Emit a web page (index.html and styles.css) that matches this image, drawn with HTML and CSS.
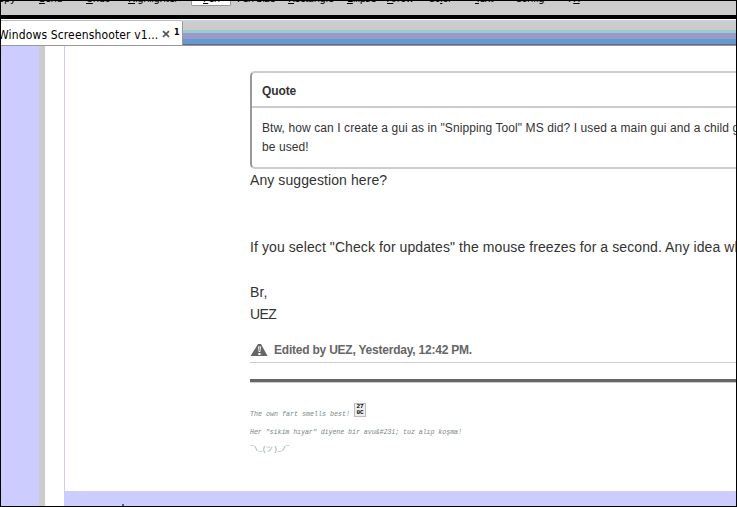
FILE: index.html
```html
<!DOCTYPE html>
<html lang="en">
<head>
<meta charset="utf-8">
<title>Windows Screenshooter</title>
<link rel="stylesheet" href="styles.css">
</head>
<body>
<div class="window">
  <div class="toolbar">
    <span>Copy</span><span><u>S</u>end</span><span><u>U</u>ndo</span><span><u>H</u>ighlighter</span><span class="active"><u>P</u>en</span><span>Pen Size</span><span><u>R</u>ectangle</span><span><u>E</u>llipse</span><span><u>A</u>rrow</span><span>Co<u>l</u>or</span><span><u>T</u>ext</span><span>Confi<u>g</u></span><span>F<u>X</u></span>
  </div>
  <div class="tabbar">
    <div class="tab">
      <span class="tab-title">Windows Screenshooter v1...</span>
      <svg class="close" width="8" height="8" viewBox="0 0 8 8"><path d="M1 1.2L7 6.8M7 1.2L1 6.8" stroke="#555" stroke-width="1.7"/></svg>
      <span class="count">1</span>
    </div>
    <div class="stripes"></div>
  </div>
  <div class="page">
    <div class="side"></div>
    <div class="post">
      <div class="content">
        <div class="quote">
          <div class="quote-title">Quote</div>
          <div class="quote-body">Btw, how can I create a gui as in "Snipping Tool" MS did? I used a main gui and a child gui<br>be used!</div>
        </div>
        <div class="message">Any suggestion here?<br><br><br>If you select "Check for updates" the mouse freezes for a second. Any idea why?<br><br>Br,<br><span class="name">UEZ</span></div>
        <div class="edited">
          <svg width="18" height="12" viewBox="0 0 18 12"><path d="M8 0h3l6.5 12H.5z" fill="#666"/><path d="M8 2.5h3L10.3 8H8.7zM8.3 9h2.3v2H8.3z" fill="#fff"/><path d="M9.1 3h.8v4h-.8z" fill="#888"/></svg>
          <span>Edited by UEZ, Yesterday, 12:42 PM.</span>
        </div>
        <div class="rule"></div>
        <div class="signature">
          <p class="first">The own fart smells best! <span class="glyph"><b>27</b><b>0C</b></span></p>
          <p>Her "sikim hıyar" diyene bir avu&amp;#231; tuz alıp koşma!</p>
          <p class="shrug">¯\_(ツ)_/¯</p>
        </div>
      </div>
      <div class="footer"><i></i></div>
    </div>
  </div>
</div>
</body>
</html>
```
FILE: styles.css
```css
* { box-sizing: border-box; }
body { margin: 0; font-family: "Liberation Sans", Arial, sans-serif; }
.window {
  width: 737px; height: 507px; border: 1px solid #000; overflow: hidden;
  display: flex; flex-direction: column; background: #fff;
}
.toolbar {
  flex: none; height: 18px; overflow: hidden; background: #ccc; border-bottom: 4px solid #000;
  display: grid; white-space: nowrap;
  grid-template-columns: 38px 47px 42px 63px 46px 51px 59px 40px 41px 47px 40px 53px 40px;
  font: 10px/12px "DejaVu Sans", sans-serif; letter-spacing: -.5px; color: #000;
}
.toolbar > span { margin-top: -8px; height: 12px; }
.toolbar > span:first-child { margin-left: -9px; }
.toolbar > .active {
  width: 40px; height: 13px; padding-left: 11px; background: #fff;
  border: 1px solid #999; border-top: 0; border-radius: 0 0 2px 2px;
}
.tabbar { flex: none; height: 27px; display: flex; }
.tab {
  width: 182px; height: 26px; flex: none; border: 1px solid #999; border-left: 0; border-radius: 0 2px 0 0;
  border-top-color: #bbb; margin-top: 1px; background: #fff;
  display: flex; white-space: nowrap; color: #000;
}
.tab-title { font: 12px/28px "DejaVu Sans Condensed", "DejaVu Sans", sans-serif; width: 161px; margin-left: -3px; letter-spacing: .14px; }
.close { margin: 9px 0 0 3px; flex: none; }
.count { font: bold 8px/24px "DejaVu Sans", sans-serif; margin-left: 4px; }
.stripes {
  flex: 1;
  background: linear-gradient(#fff 0 1px, #ccf 1px 2px, #ccc 2px 11px, #9cc 11px 14px, #99c 14px 20px, #69c 20px 25px, #669 25px 26px, #999 26px 27px);
}
.page { flex: 1; display: flex; min-height: 0; }
.side { width: 44px; flex: none; background: #ccf; border-right: 6px solid #ccc; }
.post { flex: 1; min-width: 0; margin-left: 19px; border-left: 1px solid #ccf; display: flex; flex-direction: column; }
.content { flex: 1; min-height: 0; padding: 25px 0 0 185px; overflow: hidden; white-space: nowrap; color: #333; }
.quote { height: 98px; border: 2px solid #ccc; border-left-color: #999; border-right: 0; border-radius: 5px 0 0 5px; font-size: 12px; }
.quote-title { height: 35px; line-height: 36px; padding-left: 10px; font-weight: bold; letter-spacing: -.1px; border-bottom: 2px solid #ccc; }
.quote-body { padding: 11px 0 0 10px; line-height: 19px; letter-spacing: .09px; }
.message { font-size: 14px; line-height: 22.4px; height: 170px; letter-spacing: .09px; }
.name { letter-spacing: -.6px; }
.edited {
  height: 24px; border-bottom: 1px solid #ccc; display: flex; gap: 6px; align-items: center;
  color: #666; font-size: 12px; font-weight: bold; letter-spacing: -.22px;
}
.edited svg { margin-top: -1px; }
.edited span { margin-top: -2px; }
.rule { height: 4px; margin-top: 16px; background: linear-gradient(#666 0 3px, #ccc 3px); }
.signature { font: italic 6.67px/12px "Liberation Mono", monospace; letter-spacing: -.07px; color: #788; }
.signature p { margin: 0; height: 18px; padding-top: 7px; line-height: 11px; }
.signature .first { display: flex; height: 37px; padding-top: 20px; line-height: 22px; white-space: pre; letter-spacing: .01px; }
.glyph { width: 12px; height: 14px; border: 1px solid #bbb; background: #eee; display: flex; flex-direction: column; align-items: center; font: 6px/6px "Liberation Mono", monospace; color: #000; }
.signature .shrug { font-style: normal; padding-top: 6px; letter-spacing: .1px; }
.footer { flex: none; height: 15px; background: #ccf; padding: 13px 0 0 57px; }
.footer i { display: block; width: 2px; height: 2px; background: #369; }
```
